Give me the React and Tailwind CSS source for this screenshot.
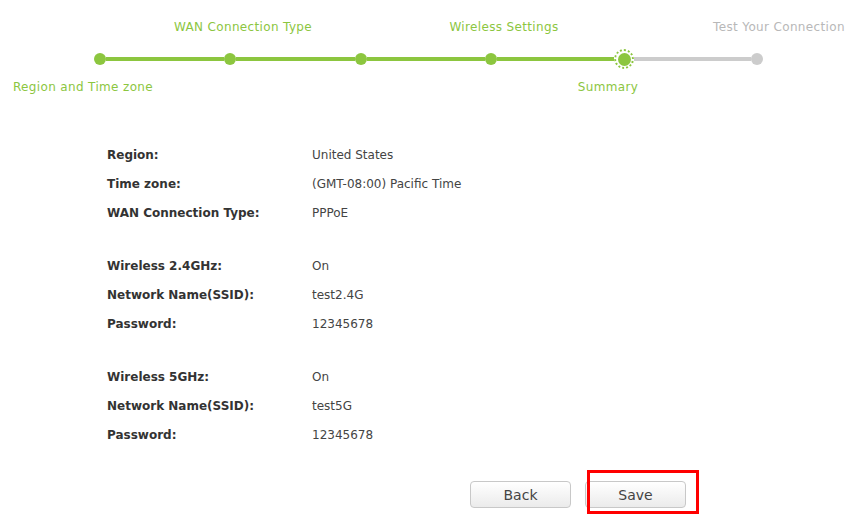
import React from "react";

const G = "bg-[#8cc63f]";

function Row({ label, value }) {
  return (
    <div className="grid grid-cols-[205px_1fr] h-[29px] items-center">
      <div className="font-bold text-[#333]">{label}</div>
      <div className="text-[#444]">{value}</div>
    </div>
  );
}

export default function App() {
  return (
    <div
      className="w-[852px] h-[524px] bg-white overflow-hidden text-[12px] leading-[14px]"
      style={{ fontFamily: '"DejaVu Sans", Verdana, sans-serif' }}
    >
      {/* Stepper */}
      <div className="pt-[20px] tracking-[0.35px]">
        <div className="flex h-[14px] whitespace-nowrap text-[12px] text-[#8cc63f]">
          <div className="shrink-0 ml-[143px] w-[200px] text-center">WAN Connection Type</div>
          <div className="shrink-0 ml-[61px] w-[200px] text-center">Wireless Settings</div>
          <div className="shrink-0 ml-[95px] w-[160px] text-center text-[#b8b8b8]">Test Your Connection</div>
        </div>
        <div className="mt-[15px] h-[20px] flex items-center">
          <div className="ml-[94px] w-[12px] h-[12px] rounded-full bg-[#8cc63f]" />
          <div className={`w-[118px] h-[4px] ${G}`} />
          <div className="w-[12px] h-[12px] rounded-full bg-[#8cc63f]" />
          <div className={`w-[119px] h-[4px] ${G}`} />
          <div className="w-[12px] h-[12px] rounded-full bg-[#8cc63f]" />
          <div className={`w-[118px] h-[4px] ${G}`} />
          <div className="w-[12px] h-[12px] rounded-full bg-[#8cc63f]" />
          <div className={`w-[117px] h-[4px] ${G}`} />
          <div className="w-[20px] h-[20px] rounded-full border-2 border-dotted border-[#8cc63f] flex items-center justify-center">
            <div className="w-[13px] h-[13px] rounded-full bg-[#8cc63f]" />
          </div>
          <div className="w-[117px] h-[4px] bg-[#cccccc]" />
          <div className="w-[12px] h-[12px] rounded-full bg-[#cccccc]" />
        </div>
        <div className="mt-[11px] flex h-[14px] whitespace-nowrap text-[#8cc63f]">
          <div className="shrink-0 ml-[3px] w-[160px] text-center">Region and Time zone</div>
          <div className="shrink-0 ml-[395px] w-[100px] text-center">Summary</div>
        </div>
      </div>

      {/* Summary table */}
      <div className="mt-[46px] ml-[107px]">
        <Row label="Region:" value="United States" />
        <Row label="Time zone:" value="(GMT-08:00) Pacific Time" />
        <Row label="WAN Connection Type:" value="PPPoE" />
        <div className="h-[24px]" />
        <Row label="Wireless 2.4GHz:" value="On" />
        <Row label="Network Name(SSID):" value="test2.4G" />
        <Row label="Password:" value="12345678" />
        <div className="h-[24px]" />
        <Row label="Wireless 5GHz:" value="On" />
        <Row label="Network Name(SSID):" value="test5G" />
        <Row label="Password:" value="12345678" />
      </div>

      {/* Buttons */}
      <div className="mt-[32px] ml-[470px] flex gap-[14px]">
        <button className="w-[101px] h-[27px] rounded-[4px] border border-[#c8c8c8] bg-gradient-to-b from-white to-[#ebebeb] text-[14px] text-[#444]">
          Back
        </button>
        <div className="relative">
          <button className="w-[101px] h-[27px] rounded-[4px] border border-[#c8c8c8] bg-gradient-to-b from-white to-[#ebebeb] text-[14px] text-[#444]">
            Save
          </button>
          <div className="absolute left-[2px] top-[-11px] w-[112px] h-[44px] border-[3px] border-[#ff0000] pointer-events-none" />
        </div>
      </div>
    </div>
  );
}
